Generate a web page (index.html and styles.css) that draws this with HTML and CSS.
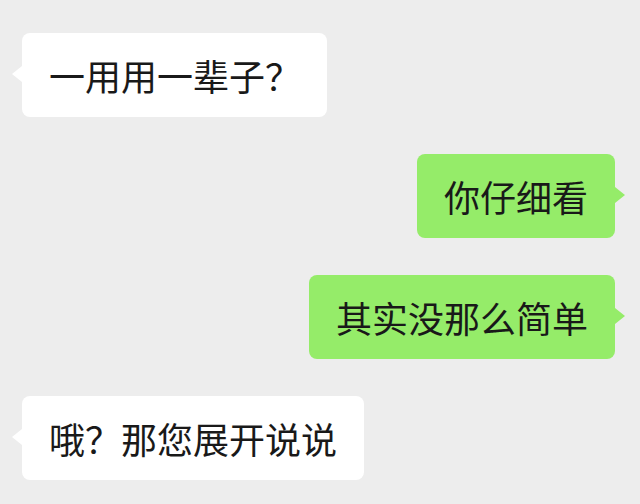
FILE: index.html
```html
<!DOCTYPE html>
<html lang="zh-CN">
<head>
<meta charset="utf-8">
<title>聊天</title>
<link rel="stylesheet" href="styles.css">
</head>
<body>
<div class="chat">
  <div class="row left"><div class="bubble recv q1">一用用一辈子？</div></div>
  <div class="row right"><div class="bubble sent">你仔细看</div></div>
  <div class="row right"><div class="bubble sent">其实没那么简单</div></div>
  <div class="row left"><div class="bubble recv">哦？那您展开说说</div></div>
</div>
</body>
</html>
```
FILE: styles.css
```css
html, body {
  margin: 0;
  padding: 0;
  background: #ededed;
  width: 640px;
  height: 504px;
  overflow: hidden;
}
.chat {
  display: flex;
  flex-direction: column;
  gap: 37px;
  padding: 33px 25px 0 22px;
  font-family: "Noto Sans CJK SC", "Noto Sans", sans-serif;
}
.row {
  display: flex;
}
.row.left { justify-content: flex-start; }
.row.right { justify-content: flex-end; }
.bubble {
  position: relative;
  font-size: 36px;
  line-height: 48px;
  padding: 18px 27px 18px 27px;
  border-radius: 8px;
  color: #191919;
  white-space: nowrap;
}
.recv { background: #ffffff; }
.sent { background: #95ec69; }
.q1 { padding-right: 26px; }
.bubble::after {
  content: "";
  position: absolute;
  top: 33px;
  width: 0;
  height: 0;
  border-top: 8px solid transparent;
  border-bottom: 8px solid transparent;
}
.recv::after {
  left: -10px;
  border-right: 10px solid #ffffff;
}
.sent::after {
  right: -10px;
  border-left: 10px solid #95ec69;
}
```
